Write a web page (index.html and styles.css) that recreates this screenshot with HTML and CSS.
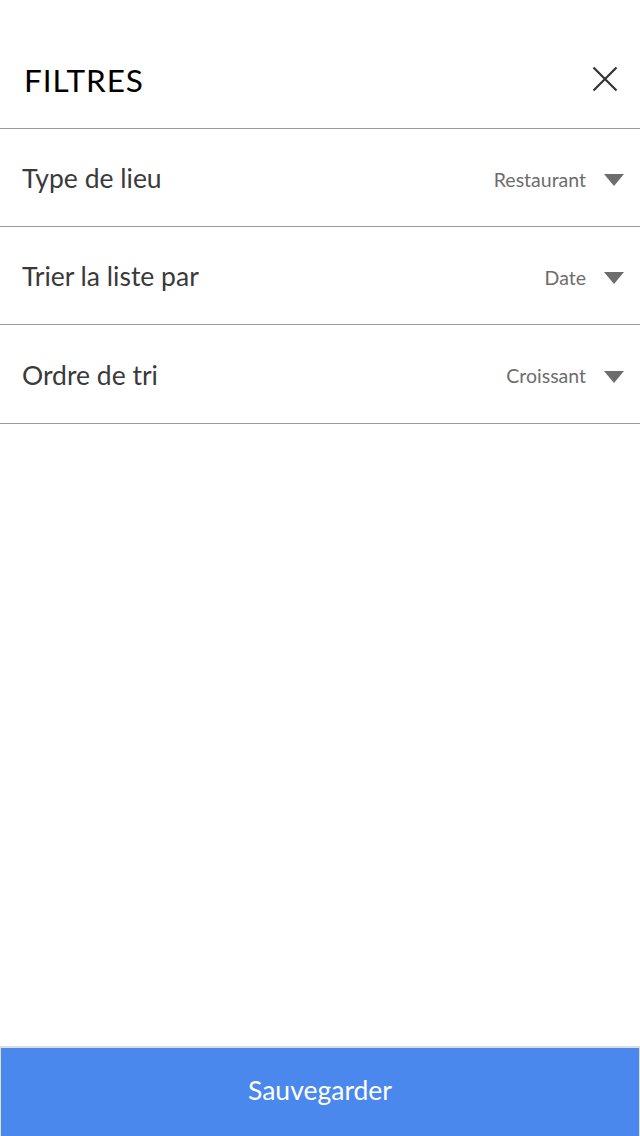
FILE: index.html
```html
<!DOCTYPE html>
<html lang="fr">
<head>
<meta charset="utf-8">
<title>Filtres</title>
<link rel="stylesheet" href="styles.css">
</head>
<body>
<div class="page">
  <header class="header">
    <h1 class="title">FILTRES</h1>
    <button class="close" aria-label="Fermer">
      <svg width="26" height="26" viewBox="0 0 26 26"><path d="M1.5 1.5 L24.5 24.5 M24.5 1.5 L1.5 24.5" stroke="#333" stroke-width="2.2" fill="none"/></svg>
    </button>
  </header>
  <ul class="filters">
    <li class="row"><span class="label">Type de lieu</span><span class="value">Restaurant<span class="caret"></span></span></li>
    <li class="row"><span class="label">Trier la liste par</span><span class="value">Date<span class="caret"></span></span></li>
    <li class="row"><span class="label">Ordre de tri</span><span class="value">Croissant<span class="caret"></span></span></li>
  </ul>
  <div class="spacer"></div>
  <button class="save">Sauvegarder</button>
</div>
</body>
</html>
```
FILE: styles.css
```css
html, body {
  margin: 0;
  padding: 0;
  background: #fff;
}
body {
  font-family: Lato, "Liberation Sans", sans-serif;
}
.page {
  display: flex;
  flex-direction: column;
  height: 1136px;
}
.header {
  height: 98px;
  display: flex;
  align-items: center;
  justify-content: space-between;
  padding: 30px 22px 0 24px;
  border-bottom: 1px solid #999;
  box-sizing: content-box;
}
.title {
  margin: 0;
  font-weight: 400;
  font-size: 31.5px;
  color: #000;
  letter-spacing: 0.9px;
  padding-top: 2px;
}
.close {
  background: none;
  border: 0;
  padding: 0;
  width: 26px;
  height: 26px;
  display: flex;
}
.filters {
  list-style: none;
  margin: 0;
  padding: 0;
}
.row {
  height: 97px;
  border-bottom: 1px solid #999;
  display: flex;
  align-items: center;
  justify-content: space-between;
  padding: 0 16px 0 22px;
}
.row:last-child {
  height: 98px;
}
.label {
  font-size: 26.5px;
  color: #3a3a3a;
  padding-top: 1px;
}
.value {
  display: flex;
  align-items: center;
  font-size: 19.5px;
  color: #6d6d6d;
  padding-top: 3px;
}
.caret {
  width: 0;
  height: 0;
  margin: 2px 0 0 18px;
  border-left: 10px solid transparent;
  border-right: 10px solid transparent;
  border-top: 12px solid #6d6d6d;
}
.spacer {
  flex: 1;
}
.save {
  height: 90px;
  margin: 0;
  border: 1px solid #ddd;
  border-top-width: 2px;
  border-bottom: 0;
  background: #4a88ee;
  color: #fff;
  font-family: Lato, "Liberation Sans", sans-serif;
  font-size: 26.5px;
  padding: 0 0 4px;
}
```
